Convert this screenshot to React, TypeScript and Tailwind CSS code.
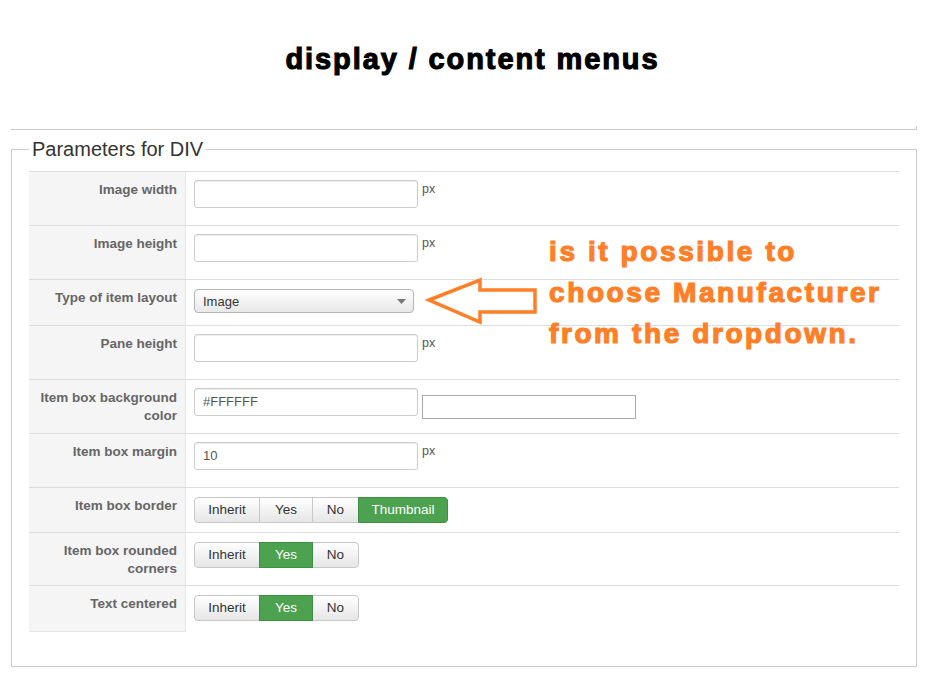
import React from 'react';

const font = { fontFamily: '"Liberation Sans", Arial, sans-serif' };

function Label({ children, last }: { children: React.ReactNode; last?: boolean }) {
    return (
        <div className={`w-[157px] shrink-0 bg-[#f5f5f5] border-r border-[#e6e6e6] pt-[9px] pr-[8px] text-right text-[13.5px] leading-[18px] font-bold text-[#666] ${last ? 'border-b' : ''}`}>
            {children}
        </div>
    );
}

function TextInput({ value = '' }: { value?: string }) {
    return (
        <div className="w-[224px] h-[28px] border border-[#ccc] rounded-[3px] bg-white shadow-[inset_0_1px_1px_rgba(0,0,0,0.075)] px-[8px] text-[13px] leading-[26px] text-[#555]">
            {value}
        </div>
    );
}

function Px() {
    return <span className="ml-[4px] text-[12.5px] leading-[18px] text-[#555]">px</span>;
}

function BtnGroup({ items, active }: { items: { label: string; w: string }[]; active: string }) {
    return (
        <div className="flex h-[26px]">
            {items.map((it, idx) => {
                const on = it.label === active;
                const first = idx === 0;
                const last = idx === items.length - 1;
                return (
                    <div
                        key={it.label}
                        className={`${it.w} h-[26px] flex items-center justify-center text-[13.5px] border ${first ? 'rounded-l-[4px]' : '-ml-px'} ${last ? 'rounded-r-[4px]' : ''} ${on ? 'bg-[#4ca24f] border-[#3f8f42] text-white relative' : 'bg-gradient-to-b from-white to-[#e6e6e6] border-[#c8c8c8] text-[#333]'}`}
                    >
                        {it.label}
                    </div>
                );
            })}
        </div>
    );
}

const three = [
    { label: 'Inherit', w: 'w-[66px]' },
    { label: 'Yes', w: 'w-[54px]' },
    { label: 'No', w: 'w-[47px]' },
];

export default function App() {
    return (
        <div className="w-[936px] h-[685px] bg-white relative overflow-hidden" style={font}>
            {/* Title */}
            <h1 className="pt-[43px] pl-[9px] text-center text-[29px] leading-[32px] font-bold tracking-[1.9px] text-black [-webkit-text-stroke:1.1px_black]">
                display / content menus
            </h1>

            {/* previous panel edge */}
            <div className="ml-[11px] w-[906px] h-[55px] border-b border-[#ccc] flex justify-end items-end">
                <div className="w-px h-[3px] bg-[#ccc]"></div>
            </div>

            <fieldset className="ml-[11px] mt-[7px] w-[906px] border border-[#ccc] px-[17px] pb-[34px]">
                <legend className="px-[3px] text-[20px] leading-[24px] text-[#333]">Parameters for DIV</legend>

                <div className="mt-[10px] text-[13px]">
                    {/* Image width */}
                    <div className="flex h-[54px] border-t border-[#ddd]">
                        <Label>Image width</Label>
                        <div className="flex items-start pt-[8px] pl-[8px]">
                            <TextInput />
                            <Px />
                        </div>
                    </div>

                    {/* Image height */}
                    <div className="flex h-[54px] border-t border-[#ddd]">
                        <Label>Image height</Label>
                        <div className="flex items-start pt-[8px] pl-[8px]">
                            <TextInput />
                            <Px />
                        </div>
                    </div>

                    {/* Type of item layout */}
                    <div className="flex h-[46px] border-t border-[#ddd]">
                        <Label>Type of item layout</Label>
                        <div className="flex items-start pt-[9px] pl-[8px]">
                            <div className="w-[220px] h-[24px] border border-[#b5b5b5] rounded-[4px] bg-gradient-to-b from-white to-[#e8e8e8] flex items-center justify-between pl-[8px] pr-[7px] text-[13px] text-[#333]">
                                <span className="pt-[2px]">Image</span>
                                <svg width="9" height="5" viewBox="0 0 9 5"><path d="M0 0h9L4.5 5z" fill="#777" /></svg>
                            </div>
                        </div>
                    </div>

                    {/* Pane height */}
                    <div className="flex h-[54px] border-t border-[#ddd]">
                        <Label>Pane height</Label>
                        <div className="flex items-start pt-[8px] pl-[8px]">
                            <TextInput />
                            <Px />
                        </div>
                    </div>

                    {/* Item box background color */}
                    <div className="flex h-[54px] border-t border-[#ddd]">
                        <Label>Item box background<br />color</Label>
                        <div className="flex items-start pt-[8px] pl-[8px]">
                            <TextInput value="#FFFFFF" />
                            <div className="ml-[4px] mt-[7px] w-[214px] h-[24px] border border-[#a9a9a9] bg-white"></div>
                        </div>
                    </div>

                    {/* Item box margin */}
                    <div className="flex h-[54px] border-t border-[#ddd]">
                        <Label>Item box margin</Label>
                        <div className="flex items-start pt-[8px] pl-[8px]">
                            <TextInput value="10" />
                            <Px />
                        </div>
                    </div>

                    {/* Item box border */}
                    <div className="flex h-[45px] border-t border-[#ddd]">
                        <Label>Item box border</Label>
                        <div className="pt-[9px] pl-[8px]">
                            <BtnGroup items={[...three, { label: 'Thumbnail', w: 'w-[90px]' }]} active="Thumbnail" />
                        </div>
                    </div>

                    {/* Item box rounded corners */}
                    <div className="flex h-[53px] border-t border-[#ddd]">
                        <Label>Item box rounded<br />corners</Label>
                        <div className="pt-[9px] pl-[8px]">
                            <BtnGroup items={three} active="Yes" />
                        </div>
                    </div>

                    {/* Text centered */}
                    <div className="flex h-[47px] border-t border-[#ddd]">
                        <Label last>Text centered</Label>
                        <div className="pt-[9px] pl-[8px]">
                            <BtnGroup items={three} active="Yes" />
                        </div>
                    </div>
                </div>
            </fieldset>

            {/* Annotation arrow */}
            <svg className="absolute left-[424px] top-[276px]" width="116" height="52" viewBox="424 276 116 52">
                <path d="M429 300 L480 280 L480 290 L535 290 L535 312 L480 312 L480 322 Z" fill="none" stroke="#ff7f27" strokeWidth="3.5" strokeLinejoin="miter" />
            </svg>

            {/* Annotation text */}
            <div className="absolute left-[549px] top-[231px] text-[28px] leading-[41px] font-bold text-[#ff7f27] tracking-[2.6px] [-webkit-text-stroke:1.2px_#ff7f27]">
                is it possible to<br />
                choose Manufacturer<br />
                from the dropdown.
            </div>
        </div>
    );
}
